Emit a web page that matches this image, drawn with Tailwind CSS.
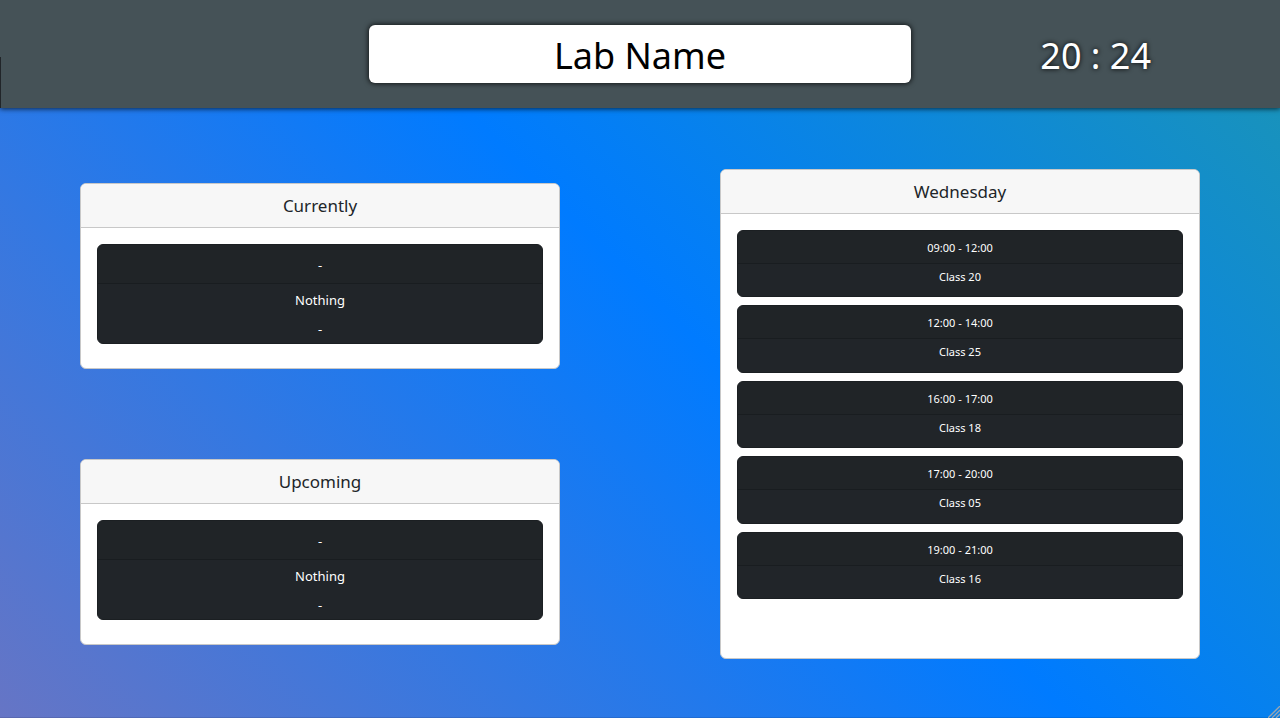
<!DOCTYPE html>
<html lang="en">
<head>
<meta charset="utf-8">
<meta name="viewport" content="width=device-width, initial-scale=1">
<title>Lab Name</title>
<script src="https://cdn.jsdelivr.net/npm/@tailwindcss/browser@4"></script>
</head>
<body class="relative flex min-h-screen flex-col overflow-x-hidden bg-[linear-gradient(45deg,#6675c5_0%,#007bff_53.7%,#1993ba_96%)] font-['Segoe_UI','Noto_Sans',sans-serif] text-[#212529]">
  <header class="relative grid grid-cols-[1fr_42.4%_1fr] items-center bg-[#455257] py-[25px] shadow-[0_1px_5px_rgba(0,0,0,0.7)]">
    <span class="absolute bottom-0 left-0 h-[51px] w-px bg-[#212529]"></span>
    <h1 class="col-start-2 rounded-md bg-white pt-1 text-center text-[36px] leading-[54px] text-black shadow-[0_0_5px_1px_rgba(0,0,0,0.7)]">Lab Name</h1>
    <time class="pt-1 text-center text-[36px] leading-[54px] text-white [text-shadow:0_0_5px_#000]">20 : 24</time>
  </header>

  <main class="grid flex-1 grid-cols-2 items-center border-b border-black/10 pt-[3px] text-center">
    <div class="mx-auto flex w-3/4 flex-col gap-[90px]">
      <section class="rounded-md border border-[#c8c8c8] bg-white">
        <h2 class="h-11 rounded-t-[5px] border-b border-[#c8c8c8] bg-[#f7f7f7] text-[17px] leading-[44px]">Currently</h2>
        <div class="px-4 pt-4 pb-6">
          <article class="rounded-md border border-[#1b1f22] bg-[#212529] text-[13px] text-white">
            <h3 class="h-[39px] rounded-t-[5px] border-b border-[#191d20] bg-[#202427] leading-[40px]">-</h3>
            <p class="h-[29px] leading-[32px]">Nothing</p>
            <p class="h-[30px] leading-[32px]">-</p>
          </article>
        </div>
      </section>
      <section class="rounded-md border border-[#c8c8c8] bg-white">
        <h2 class="h-11 rounded-t-[5px] border-b border-[#c8c8c8] bg-[#f7f7f7] text-[17px] leading-[44px]">Upcoming</h2>
        <div class="px-4 pt-4 pb-6">
          <article class="rounded-md border border-[#1b1f22] bg-[#212529] text-[13px] text-white">
            <h3 class="h-[39px] rounded-t-[5px] border-b border-[#191d20] bg-[#202427] leading-[40px]">-</h3>
            <p class="h-[29px] leading-[32px]">Nothing</p>
            <p class="h-[30px] leading-[32px]">-</p>
          </article>
        </div>
      </section>
    </div>

    <section class="mx-auto w-3/4 rounded-md border border-[#c8c8c8] bg-white">
      <h2 class="h-11 rounded-t-[5px] border-b border-[#c8c8c8] bg-[#f7f7f7] text-[17px] leading-[44px]">Wednesday</h2>
      <ul class="mx-4 mt-4 mb-[59px] grid h-[369px] grid-rows-5 gap-2 text-[11px] text-white">
        <li class="rounded-md border border-[#1b1f22] bg-[#212529]">
          <h3 class="h-[33px] rounded-t-[5px] border-b border-[#191d20] bg-[#202427] leading-[34px]">09:00 - 12:00</h3>
          <p class="leading-[26px]">Class 20</p>
        </li>
        <li class="rounded-md border border-[#1b1f22] bg-[#212529]">
          <h3 class="h-[33px] rounded-t-[5px] border-b border-[#191d20] bg-[#202427] leading-[34px]">12:00 - 14:00</h3>
          <p class="leading-[26px]">Class 25</p>
        </li>
        <li class="rounded-md border border-[#1b1f22] bg-[#212529]">
          <h3 class="h-[33px] rounded-t-[5px] border-b border-[#191d20] bg-[#202427] leading-[34px]">16:00 - 17:00</h3>
          <p class="leading-[26px]">Class 18</p>
        </li>
        <li class="rounded-md border border-[#1b1f22] bg-[#212529]">
          <h3 class="h-[33px] rounded-t-[5px] border-b border-[#191d20] bg-[#202427] leading-[34px]">17:00 - 20:00</h3>
          <p class="leading-[26px]">Class 05</p>
        </li>
        <li class="rounded-md border border-[#1b1f22] bg-[#212529]">
          <h3 class="h-[33px] rounded-t-[5px] border-b border-[#191d20] bg-[#202427] leading-[34px]">19:00 - 21:00</h3>
          <p class="leading-[26px]">Class 16</p>
        </li>
      </ul>
    </section>
  </main>

  <!-- Corner resize grip -->
  <svg class="absolute right-0 bottom-0 size-3" viewBox="0 0 12 12" fill="none" stroke="#9aa5b0" stroke-width="1.3" aria-hidden="true">
    <path d="M0 12 12 0M4 12l8-8M8 12l4-4"/>
  </svg>
</body>
</html>
